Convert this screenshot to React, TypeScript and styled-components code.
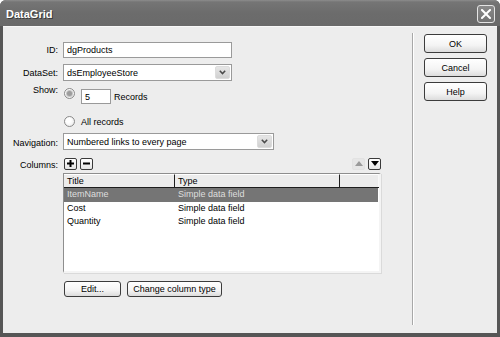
import React from "react";
import styled, { createGlobalStyle } from "styled-components";

const Global = createGlobalStyle`
  html, body { margin: 0; padding: 0; background: #ffffff; }
  body { font-family: "Liberation Sans", Arial, sans-serif; font-size: 9px; color: #000; }
  * { box-sizing: border-box; }
`;

const Window = styled.div`
  width: 500px;
  height: 337px;
  display: flex;
  flex-direction: column;
  background: #565656;
  border-radius: 6px 6px 0 0;
  overflow: hidden;
`;

const TitleBar = styled.div`
  height: 26px;
  flex: none;
  display: flex;
  align-items: center;
  justify-content: space-between;
  padding: 0 5px 0 6px;
  background: linear-gradient(#8c8c8c 0px, #757575 2px, #6c6c6c 50%, #6a6a6a 100%);
`;

const Title = styled.div`
  font-family: "Liberation Sans", Arial, sans-serif;
  font-weight: bold;
  font-size: 11px;
  color: #ffffff;
  text-shadow: 1px 1px 0 #3a3a3a;
  margin-top: 2px;
`;

const CloseButton = styled.div`
  width: 18px;
  height: 18px;
  margin-top: 1px;
  border: 1px solid #e4e4e4;
  border-radius: 3px;
  background: linear-gradient(#8a8a8a, #737373);
  display: flex;
  align-items: center;
  justify-content: center;
`;

const Body = styled.div`
  flex: 1;
  margin: 0 3px 4px 3px;
  background: #ededed;
  display: flex;
  border-top: 1px solid #f8f8f8;
`;

const Form = styled.div`
  width: 409px;
  flex: none;
  display: flex;
  flex-direction: column;
`;

const Row = styled.div<{ $mt: number; $h?: number; $align?: string }>`
  display: flex;
  align-items: ${(p) => p.$align || "center"};
  margin-top: ${(p) => p.$mt}px;
  height: ${(p) => (p.$h ? `${p.$h}px` : "auto")};
`;

const Label = styled.div<{ $top?: number }>`
  width: 55px;
  flex: none;
  text-align: right;
  margin-right: 5px;
  line-height: 12px;
  margin-top: ${(p) => p.$top || 0}px;
  color: #000;
`;

const Spacer = styled.div`
  width: 60px;
  flex: none;
`;

const TextBox = styled.div<{ $w: number; $h: number; $ml?: number; $top?: number }>`
  width: ${(p) => p.$w}px;
  height: ${(p) => p.$h}px;
  margin-left: ${(p) => p.$ml || 0}px;
  margin-top: ${(p) => p.$top || 0}px;
  border: 1px solid #9a9a9a;
  background: #ffffff;
  padding-left: 3px;
  display: flex;
  align-items: center;
  flex: none;
`;

const Select = styled.div<{ $w: number }>`
  width: ${(p) => p.$w}px;
  height: 17px;
  border: 1px solid #9a9a9a;
  background: #ffffff;
  display: flex;
  align-items: center;
  padding: 1px 1px 1px 3px;
  flex: none;
`;

const SelectText = styled.div`
  flex: 1;
`;

const DropButton = styled.div`
  width: 15px;
  height: 100%;
  background: linear-gradient(#e6e6e6, #d0d0d0);
  border: 1px solid #dcdcdc;
  border-radius: 2px;
  display: flex;
  align-items: center;
  justify-content: center;
`;

const Radio = styled.div<{ $checked?: boolean; $top?: number }>`
  width: 11px;
  height: 11px;
  border-radius: 50%;
  border: 1px solid #8a8a8a;
  background: radial-gradient(circle at 40% 40%, #ffffff 30%, #e2e2e2 100%);
  margin-left: 1px;
  margin-top: ${(p) => p.$top || 0}px;
  display: flex;
  align-items: center;
  justify-content: center;
  flex: none;
  &::after {
    content: "";
    display: ${(p) => (p.$checked ? "block" : "none")};
    width: 5px;
    height: 5px;
    border-radius: 50%;
    background: #9c9c9c;
    box-shadow: 0 0 0 1px #c4c4c4;
  }
`;

const RadioText = styled.div<{ $ml: number; $top?: number }>`
  margin-left: ${(p) => p.$ml}px;
  margin-top: ${(p) => p.$top || 0}px;
  line-height: 12px;
`;

const SmallButton = styled.div<{ $disabled?: boolean; $ml?: number }>`
  width: 13px;
  height: 12px;
  margin-left: ${(p) => p.$ml || 0}px;
  border: 1px solid ${(p) => (p.$disabled ? "#e2e2e2" : "#3a3a3a")};
  border-radius: 2px;
  background: ${(p) => (p.$disabled ? "#e6e6e6" : "linear-gradient(#ffffff, #e4e4e4)")};
  display: flex;
  align-items: center;
  justify-content: center;
  flex: none;
`;

const ColumnsBar = styled.div`
  width: 318px;
  display: flex;
  align-items: center;
`;

const Grow = styled.div`
  flex: 1;
`;

const Grid = styled.div`
  width: 318px;
  height: 100px;
  background: #ffffff;
  border-left: 1px solid #8e8e8e;
  border-top: 1px solid #8e8e8e;
  border-right: 2px solid #f4f4f4;
  border-bottom: 2px solid #f4f4f4;
  box-shadow: 1px 1px 0 #dadada;
  display: flex;
  flex-direction: column;
`;

const GridHeader = styled.div`
  display: grid;
  grid-template-columns: 111px 165px 1fr;
  height: 14px;
  background: #ececec;
  border-bottom: 1px solid #1e1e1e;
`;

const HeadCell = styled.div<{ $last?: boolean }>`
  border-right: 1px solid ${(p) => (p.$last ? "#f8f8f8" : "#1e1e1e")};
  border-top: 1px solid #ffffff;
  padding-left: 3px;
  line-height: 12px;
`;

const GridRow = styled.div<{ $selected?: boolean }>`
  display: grid;
  grid-template-columns: 111px 165px 1fr;
  height: 13.5px;
  line-height: 13.5px;
  background: ${(p) => (p.$selected ? "#757575" : "transparent")};
  color: ${(p) => (p.$selected ? "#dedede" : "#000")};
  margin-right: 1px;
`;

const Cell = styled.div`
  padding-left: 3px;
  white-space: nowrap;
`;

const PushButton = styled.div<{ $w: number; $h: number }>`
  width: ${(p) => p.$w}px;
  height: ${(p) => p.$h}px;
  border: 1px solid #3c3c3c;
  border-radius: 3px;
  background: linear-gradient(#ffffff 0%, #f4f4f4 60%, #dcdcdc 100%);
  display: flex;
  align-items: center;
  justify-content: center;
  flex: none;
  color: #000;
`;

const ButtonRow = styled.div`
  display: flex;
  gap: 6px;
  margin-left: 1px;
`;

const Separator = styled.div`
  width: 2px;
  flex: none;
  margin: 6px 0 8px 0;
  border-left: 1px solid #a8a8a8;
  border-right: 1px solid #ffffff;
`;

const Side = styled.div`
  display: flex;
  flex-direction: column;
  gap: 5px;
  padding: 7px 0 0 10px;
`;

const Chevron = () => (
  <svg width="7" height="5" viewBox="0 0 7 5">
    <polyline points="0.8,0.8 3.5,3.6 6.2,0.8" fill="none" stroke="#4a4a4a" strokeWidth="1.5" />
  </svg>
);

const CloseX = () => (
  <svg width="10" height="10" viewBox="0 0 10 10">
    <path d="M1 1 L9 9 M9 1 L1 9" stroke="#ffffff" strokeWidth="2" strokeLinecap="square" />
  </svg>
);

const Plus = () => (
  <svg width="7" height="7" viewBox="0 0 7 7">
    <path d="M3.5 0 V7 M0 3.5 H7" stroke="#000" strokeWidth="2" />
  </svg>
);

const Minus = () => (
  <svg width="7" height="7" viewBox="0 0 7 7">
    <path d="M0 3.5 H7" stroke="#000" strokeWidth="2" />
  </svg>
);

const Tri = ({ up, color }: { up?: boolean; color: string }) => (
  <svg width="8" height="5" viewBox="0 0 8 5">
    <polygon points={up ? "0,5 8,5 4,0" : "0,0 8,0 4,5"} fill={color} />
  </svg>
);

const rows = [
  { title: "ItemName", type: "Simple data field", selected: true },
  { title: "Cost", type: "Simple data field" },
  { title: "Quantity", type: "Simple data field" },
];

export default function App() {
  return (
    <>
      <Global />
      <Window>
        <TitleBar>
          <Title>DataGrid</Title>
          <CloseButton>
            <CloseX />
          </CloseButton>
        </TitleBar>
        <Body>
          <Form>
            <Row $mt={15} $h={16}>
              <Label>ID:</Label>
              <TextBox $w={169} $h={16}>dgProducts</TextBox>
            </Row>
            <Row $mt={6} $h={17}>
              <Label>DataSet:</Label>
              <Select $w={169}>
                <SelectText>dsEmployeeStore</SelectText>
                <DropButton>
                  <Chevron />
                </DropButton>
              </Select>
            </Row>
            <Row $mt={3} $h={21} $align="flex-start">
              <Label>Show:</Label>
              <Radio $checked $top={4} />
              <TextBox $w={30} $h={15} $ml={6} $top={5}>5</TextBox>
              <RadioText $ml={3} $top={7}>Records</RadioText>
            </Row>
            <Row $mt={10} $h={12}>
              <Spacer />
              <Radio />
              <RadioText $ml={6} $top={2}>All records</RadioText>
            </Row>
            <Row $mt={6} $h={17}>
              <Label $top={2}>Navigation:</Label>
              <Select $w={211}>
                <SelectText>Numbered links to every page</SelectText>
                <DropButton>
                  <Chevron />
                </DropButton>
              </Select>
            </Row>
            <Row $mt={8} $h={11}>
              <Label $top={3}>Columns:</Label>
              <ColumnsBar>
                <SmallButton $ml={1}>
                  <Plus />
                </SmallButton>
                <SmallButton $ml={3}>
                  <Minus />
                </SmallButton>
                <Grow />
                <SmallButton $disabled>
                  <Tri up color="#9a9a9a" />
                </SmallButton>
                <SmallButton $ml={3}>
                  <Tri color="#000" />
                </SmallButton>
              </ColumnsBar>
            </Row>
            <Row $mt={4}>
              <Spacer />
              <Grid>
                <GridHeader>
                  <HeadCell>Title</HeadCell>
                  <HeadCell>Type</HeadCell>
                  <HeadCell $last />
                </GridHeader>
                {rows.map((r) => (
                  <GridRow key={r.title} $selected={r.selected}>
                    <Cell>{r.title}</Cell>
                    <Cell>{r.type}</Cell>
                    <Cell />
                  </GridRow>
                ))}
              </Grid>
            </Row>
            <Row $mt={8} $h={16}>
              <Spacer />
              <ButtonRow>
                <PushButton $w={57} $h={16}>Edit...</PushButton>
                <PushButton $w={95} $h={16}>Change column type</PushButton>
              </ButtonRow>
            </Row>
          </Form>
          <Separator />
          <Side>
            <PushButton $w={63} $h={19}>OK</PushButton>
            <PushButton $w={63} $h={19}>Cancel</PushButton>
            <PushButton $w={63} $h={19}>Help</PushButton>
          </Side>
        </Body>
      </Window>
    </>
  );
}
